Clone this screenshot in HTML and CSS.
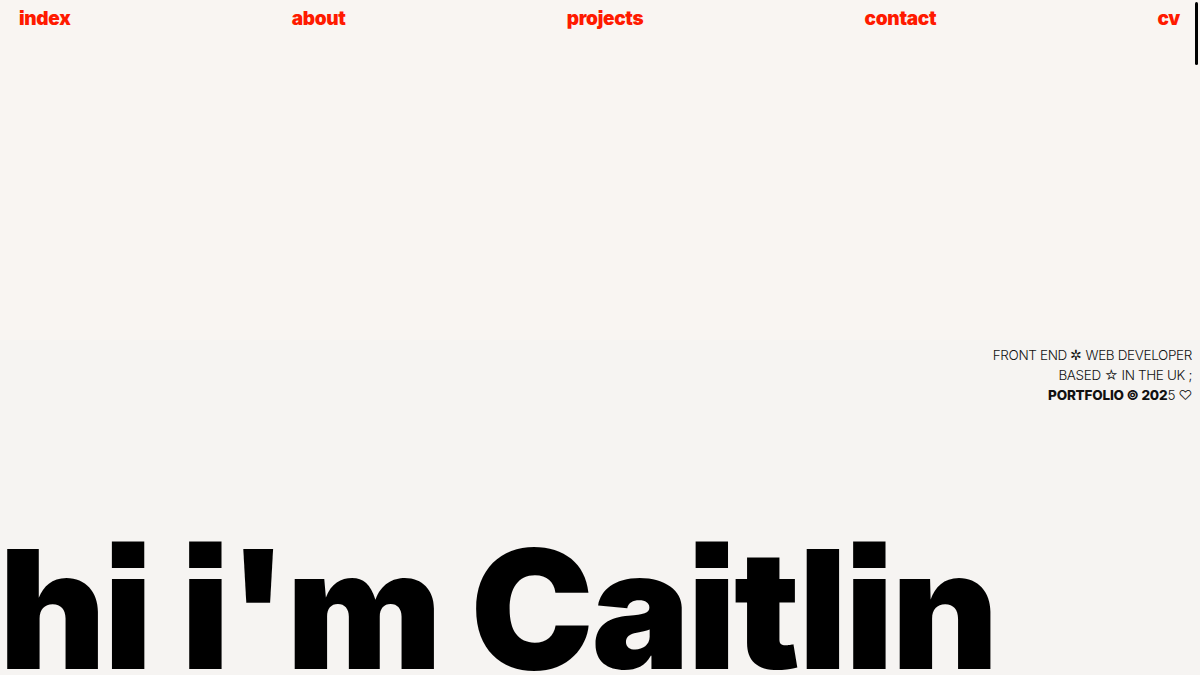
FILE: index.html
```html
<!DOCTYPE html>
<html lang="en">
<head>
<meta charset="utf-8">
<title>Caitlin — Portfolio</title>
<link rel="stylesheet" href="styles.css">
</head>
<body>
<header class="top">
  <nav class="nav">
    <a class="nav-link" href="#">index</a>
    <a class="nav-link" href="#">about</a>
    <a class="nav-link" href="#">projects</a>
    <a class="nav-link" href="#">contact</a>
    <a class="nav-link" href="#">cv</a>
  </nav>
</header>
<main class="hero">
  <div class="info">
    <p class="info-line">FRONT END ✲ WEB DEVELOPER</p>
    <p class="info-line">BASED ☆ IN THE UK ;</p>
    <p class="info-line"><strong class="bold">PORTFOLIO © 202</strong>5 ♡</p>
  </div>
  <h1 class="title">hi i'm Caitlin</h1>
</main>
<div class="scroll-thumb"></div>
</body>
</html>
```
FILE: styles.css
```css
html, body {
  margin: 0;
  padding: 0;
  height: 100%;
}
body {
  overflow: hidden;
  background: #f6f4f2;
  font-family: Inter, "Noto Sans", sans-serif;
  display: flex;
  flex-direction: column;
}
.top {
  height: 340px;
  flex: none;
  background: #f9f5f2;
}
.nav {
  display: flex;
  justify-content: space-between;
  padding: 7px 20px 0 19px;
}
.nav-link {
  color: #ff1a00;
  text-decoration: none;
  font-weight: 900;
  font-size: 19px;
  line-height: 24px;
  letter-spacing: -0.3px;
  font-feature-settings: "ss07", "ss08";
}
.hero {
  flex: 1;
  display: flex;
  flex-direction: column;
  justify-content: space-between;
  background: #f6f4f2;
  overflow: hidden;
}
.info {
  align-self: flex-end;
  padding: 5px 8px 0 0;
  text-align: right;
}
.info-line {
  margin: 0;
  font-size: 13.5px;
  line-height: 20px;
  font-weight: 300;
  letter-spacing: -0.35px;
  color: #111;
}
.bold {
  font-weight: 800;
  letter-spacing: -0.2px;
}
.title {
  margin: 0 0 0 -1px;
  font-size: 165px;
  line-height: 0.8;
  font-weight: 900;
  letter-spacing: -0.014em;
  color: #000;
  white-space: nowrap;
  font-feature-settings: "ss07", "ss08";
}
.scroll-thumb {
  position: fixed;
  top: 2px;
  right: 2px;
  width: 3px;
  height: 63px;
  border-radius: 2px;
  background: #000;
}
```
